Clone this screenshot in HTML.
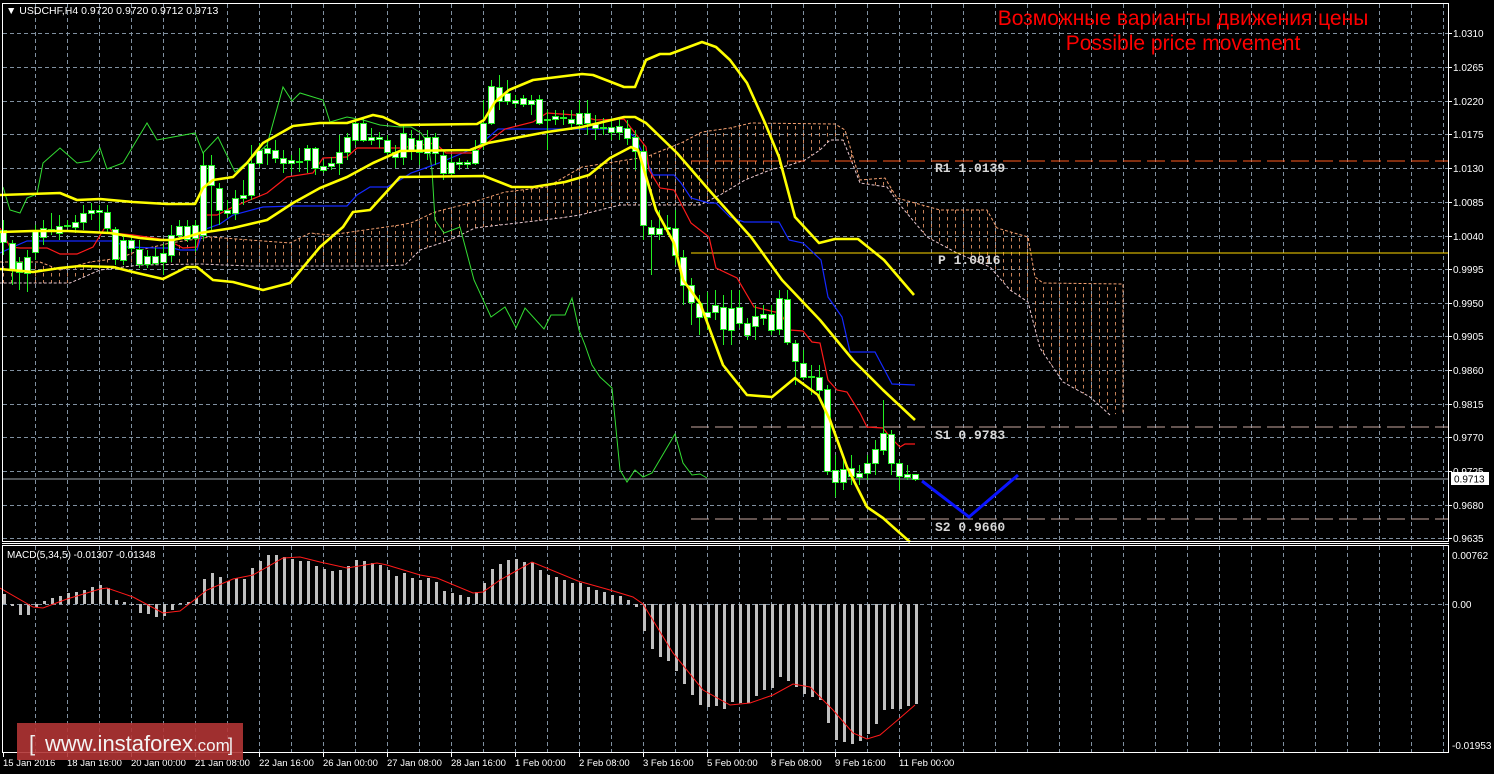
<!DOCTYPE html>
<html><head><meta charset="utf-8"><style>
html,body{margin:0;padding:0;background:#000;width:1494px;height:774px;overflow:hidden}
svg{display:block}
text{font-family:"Liberation Sans","DejaVu Sans",sans-serif}
text.mono{font-family:"Liberation Mono","DejaVu Sans Mono",monospace;font-weight:bold}
</style></head><body>
<svg id="s" width="1494" height="774" xmlns="http://www.w3.org/2000/svg">
<defs>
<pattern id="hatch" width="8" height="7" patternUnits="userSpaceOnUse">
<line x1="3.5" y1="0" x2="3.5" y2="3.5" stroke="#e89868" stroke-width="1"/>
</pattern>
</defs>
<rect width="1494" height="774" fill="#000"/>
<g id="grid" stroke="#8090a0" stroke-width="1" stroke-dasharray="4,3"></g>
<!-- cloud -->
<polygon points="0,262 40,262 60,270 90,262 120,258 140,250 170,243 210,237 250,240 290,243 310,233 330,235 400,225 411,223 435,212 470,203 505,192 547,187 582,167 646,157 681,143 702,132 730,128 751,123 835,124 845,130 860,180 885,178 897,198 940,210 987,210 997,228 1028,237 1035,277 1043,283 1123,284 1123,413 1110,415 1090,397 1063,382 1040,348 1028,302 1010,290 990,267 957,253 927,237 900,205 887,187 860,183 850,157 843,140 830,140 820,150 805,160 790,165 770,170 745,180 720,195 700,205 650,205 620,205 580,215 560,218 500,225 475,228 450,240 420,250 405,265 380,266 300,266 250,266 200,264 140,265 100,270 70,283 40,283 0,283" fill="url(#hatch)" stroke="none" opacity="0.85"/>
<polyline fill="none" stroke="#f4a070" stroke-width="1" stroke-dasharray="3,2" points="0,262 40,262 60,270 90,262 120,258 140,250 170,243 210,237 250,240 290,243 310,233 330,235 400,225 411,223 435,212 470,203 505,192 547,187 582,167 646,157 681,143 702,132 730,128 751,123 835,124 845,130 860,180 885,178 897,198 940,210 987,210 997,228 1028,237 1035,277 1043,283 1123,284 1123,413"/>
<polyline fill="none" stroke="#e8c8d0" stroke-width="1" stroke-dasharray="3,2" points="1110,415 1090,397 1063,382 1040,348 1028,302 1010,290 990,267 957,253 927,237 900,205 887,187 860,183 850,157 843,140 830,140 820,150 805,160 790,165 770,170 745,180 720,195 700,205 650,205 620,205 580,215 560,218 500,225 475,228 450,240 420,250 405,265 380,266 300,266 250,266 200,264 140,265 100,270 70,283 40,283 0,283"/>
<!-- pivot lines -->
<line x1="691" y1="161" x2="1449" y2="161" stroke="#ff5a1e" stroke-width="1" stroke-dasharray="18,6"/>
<line x1="691" y1="253" x2="1449" y2="253" stroke="#ffd700" stroke-width="1"/>
<line x1="691" y1="427" x2="1449" y2="427" stroke="#c8a8a0" stroke-width="1" stroke-dasharray="18,6"/>
<line x1="691" y1="519" x2="1449" y2="519" stroke="#c8a8a0" stroke-width="1" stroke-dasharray="18,6"/>
<line x1="2" y1="479" x2="1449" y2="479" stroke="#a0a8b0" stroke-width="1"/>
<g font-size="13" fill="#d8d8d8">
<text class="mono" x="935" y="172">R1 1.0139</text>
<text class="mono" x="938" y="264">P 1.0016</text>
<text class="mono" x="935" y="439">S1 0.9783</text>
<text class="mono" x="935" y="531">S2 0.9660</text>
</g>
<!-- chikou -->
<polyline fill="none" stroke="#33dd33" stroke-width="1" points="3,187 10,210 20,213 27,198 37,194 43,163 60,148 77,163 90,161 100,148 107,169 123,163 147,123 157,140 173,137 195,133 203,153 218,137 235,172 247,162 267,145 283,87 292,101 300,93 323,100 330,122 347,117 363,120 380,125 400,127 411,127 421,133 428,143 432,170 435,220 444,233 460,227 474,280 491,317 505,307 516,328 525,308 544,329 551,315 565,315 572,298 579,330 585,345 592,365 600,377 612,388 620,470 627,482 635,470 643,477 652,473 675,434 683,463 692,475 700,474 707,478"/>
<!-- kijun blue -->
<polyline fill="none" stroke="#1428ff" stroke-width="1.2" points="0,253 13,247 27,241 113,241 127,247 157,248 173,248 180,250 197,250 203,230 220,224 233,215 263,207 293,206 347,206 357,195 370,187 387,187 400,180 411,173 428,167 439,163 477,147 498,129 624,129 635,137 646,160 653,175 674,175 681,183 691,198 709,203 716,203 730,217 744,222 779,222 789,240 803,243 821,260 828,297 842,317 850,352 875,352 892,384 915,385"/>
<!-- tenkan red -->
<polyline fill="none" stroke="#ff1a1a" stroke-width="1.2" points="0,228 10,247 20,248 47,248 60,254 77,254 93,247 107,224 113,233 133,235 167,240 183,248 197,247 204,215 217,215 233,207 250,200 267,193 287,177 313,173 323,158 347,157 357,148 400,148 435,143 446,153 474,153 505,129 533,122 547,113 575,115 596,120 624,119 646,147 649,170 660,188 674,190 691,223 709,237 716,268 737,278 754,307 775,312 780,312 790,330 803,331 812,342 820,343 828,380 837,390 847,392 860,413 867,427 883,428 890,437 900,447 905,444 915,444"/>
<g id="candles"></g>
<!-- bollinger -->
<g fill="none" stroke="#ffff00" stroke-width="2.6" stroke-linejoin="round">
<polyline points="0,195 60,193 77,200 100,199 133,202 167,204 195,204 203,188 213,180 233,177 247,163 263,143 293,126 320,123 347,123 373,115 383,117 400,125 477,124 484,120 495,102 509,90 533,80 582,74 593,75 624,87 635,87 646,60 660,54 670,54 702,42 716,47 730,60 747,83 765,123 779,157 795,217 819,243 835,239 858,239 884,260 914,295"/>
<polyline points="0,232 33,231 67,231 110,233 140,238 160,240 173,240 187,237 200,233 233,228 267,220 293,203 320,188 347,177 373,163 400,151 470,150 488,143 547,132 582,127 624,117 635,117 646,123 677,153 709,190 751,237 782,280 820,320 853,360 883,390 915,420"/>
<polyline points="0,269 33,272 60,268 80,266 113,267 137,273 163,279 187,267 197,267 213,280 233,282 263,290 290,283 320,247 343,227 353,212 370,210 400,177 484,176 512,187 533,187 565,182 589,175 610,158 631,147 638,150 642,163 656,210 674,243 683,280 700,303 723,365 747,395 772,397 795,378 818,395 830,420 847,467 867,507 883,518 910,542"/>
</g>
<!-- projection -->
<polyline fill="none" stroke="#0a14ff" stroke-width="3" points="922,481 969,517 1018,475"/>
<!-- MACD -->
<path id="macd" fill="none" stroke="#c0c0c0" stroke-width="3" d=""/>
<polyline fill="none" stroke="#ff1a1a" stroke-width="1" points="0,588 33,607 43,608 67,599 100,589 107,588 133,597 163,613 180,611 207,590 233,579 253,575 283,558 300,557 320,562 347,568 377,563 387,565 420,575 437,578 473,593 483,592 500,580 532,562 578,581 610,590 633,597 643,604 673,653 703,690 730,705 750,703 773,695 793,684 810,687 833,710 853,733 867,739 880,735 900,718 915,705"/>
<!-- frames -->
<g stroke="#fff" stroke-width="1" fill="none">
<rect x="2.5" y="3.5" width="1446" height="538"/>
<rect x="2.5" y="545.5" width="1446" height="207"/>
</g>
<line x1="2" y1="543.5" x2="1449" y2="543.5" stroke="#fff" stroke-width="1"/>
<g id="axis" font-size="10" fill="#fff"></g>
<rect x="1451" y="472" width="38" height="13" fill="#fff"/>
<text x="1454" y="482.5" font-size="10" fill="#000">0.9713</text>
<text x="6" y="14" font-size="10.5" fill="#fff">▼ USDCHF,H4  0.9720 0.9720 0.9712 0.9713</text>
<text x="7" y="558" font-size="10" fill="#fff">MACD(5,34,5) -0.01307 -0.01348</text>
<text x="1183" y="25" font-size="21" fill="#ff0000" text-anchor="middle">Возможные варианты движения цены</text>
<text x="1183" y="50" font-size="21" fill="#ff0000" text-anchor="middle">Possible price movement</text>
<!-- logo -->
<rect x="17" y="723" width="226" height="37" fill="#b03434" fill-opacity="0.9"/>
<text x="29" y="751" font-size="22" fill="#eee">[</text>
<text x="45" y="751" font-size="22" fill="#f4f4f4">www.instaforex<tspan font-size="17">.com</tspan></text>
<text x="228" y="751" font-size="18" fill="#eee">]</text>
</svg>
<script>
(function(){
var NS="http://www.w3.org/2000/svg";
function el(t,a,p){var e=document.createElementNS(NS,t);for(var k in a)e.setAttribute(k,a[k]);p.appendChild(e);return e;}
var g=document.getElementById('grid');
var lv=[["1.0310",33],["1.0265",67],["1.0220",101],["1.0175",134],["1.0130",168],["1.0085",202],["1.0040",236],["0.9995",269],["0.9950",303],["0.9905",336],["0.9860",370],["0.9815",404],["0.9770",437],["0.9725",471],["0.9680",505],["0.9635",538]];
lv.forEach(function(l){el('line',{x1:3,y1:l[1]+.5,x2:1449,y2:l[1]+.5},g);});
el('line',{x1:3,y1:604.5,x2:1449,y2:604.5},g);
for(var x=35;x<1449;x+=32){el('line',{x1:x+.5,y1:4,x2:x+.5,y2:541},g);el('line',{x1:x+.5,y1:546,x2:x+.5,y2:752},g);}
var ax=document.getElementById('axis');
lv.forEach(function(l){var t=el('text',{x:1453,y:l[1]+4},ax);t.textContent=l[0];el('line',{x1:1449,y1:l[1]+.5,x2:1452,y2:l[1]+.5,stroke:'#fff'},ax);});
[["0.00762",559],["0.00",608],["-0.01953",749]].forEach(function(l){var t=el('text',{x:1452,y:l[1]},ax);t.textContent=l[0];});
var tl=["15 Jan 2016","18 Jan 16:00","20 Jan 00:00","21 Jan 08:00","22 Jan 16:00","26 Jan 00:00","27 Jan 08:00","28 Jan 16:00","1 Feb 00:00","2 Feb 08:00","3 Feb 16:00","5 Feb 00:00","8 Feb 08:00","9 Feb 16:00","11 Feb 00:00"];
tl.forEach(function(s,i){var x=i==0?3:3+64*i;var t=el('text',{x:x,y:766,'font-size':'9.5'},ax);t.textContent=s;el('line',{x1:x+.5,y1:753,x2:x+.5,y2:757,stroke:'#fff'},ax);});
var C=[[3,230,242,220,255],[12,243,270,240,285],[19,262,272,257,290],[27,257,273,250,292],[35,230,252,225,260],[43,228,237,220,245],[51,229,231,213,235],[59,226,233,215,240],[67,225,226,220,228],[75,222,227,215,233],[83,213,222,205,230],[91,210,213,203,220],[99,210,212,205,230],[107,212,228,205,233],[115,229,259,227,265],[123,240,260,235,265],[131,240,248,235,252],[139,249,264,240,268],[147,256,264,250,268],[155,256,263,248,265],[163,253,262,244,275],[171,235,255,225,262],[179,226,235,220,240],[187,226,239,220,242],[195,225,238,220,252],[203,165,235,153,240],[211,165,185,155,230],[219,188,210,183,225],[227,210,213,200,218],[235,198,213,190,220],[243,195,198,180,205],[251,163,195,145,200],[259,150,163,143,167],[267,148,153,140,165],[275,150,158,140,163],[283,158,163,150,173],[291,160,163,155,172],[299,161,162,148,172],[307,148,160,145,173],[315,148,168,147,175],[323,166,170,160,173],[331,163,166,157,170],[339,152,163,135,175],[347,137,152,133,160],[355,123,140,120,145],[363,123,140,118,142],[371,137,140,128,145],[379,137,139,132,148],[387,140,152,135,155],[395,152,157,145,168],[403,133,157,125,165],[411,138,150,130,160],[419,140,152,135,165],[427,137,153,130,160],[435,137,153,133,165],[443,155,173,150,180],[451,162,173,155,177],[459,162,164,158,170],[467,162,164,160,168],[475,150,163,140,165],[483,123,143,100,150],[491,86,123,80,125],[499,87,101,75,110],[507,93,101,80,105],[515,100,103,95,108],[523,98,104,95,107],[531,100,104,95,115],[539,99,123,95,125],[547,119,120,110,150],[555,116,119,110,125],[563,117,118,110,125],[571,119,123,110,130],[579,113,124,100,130],[587,113,123,100,135],[595,124,128,115,140],[603,127,128,118,135],[611,127,132,118,140],[619,126,132,118,140],[627,128,138,120,145],[635,137,151,130,170],[643,151,225,145,240],[651,227,234,220,275],[659,228,234,210,240],[667,227,229,215,235],[675,228,255,210,265],[683,257,285,250,305],[691,285,302,278,325],[699,303,317,295,335],[707,312,317,292,330],[715,305,312,290,320],[723,307,329,295,345],[731,308,330,290,345],[739,307,323,290,328],[747,323,335,318,340],[755,316,326,305,340],[763,314,318,305,325],[771,314,330,305,335],[779,298,329,290,335],[787,299,342,290,345],[795,343,361,340,385],[803,363,377,350,380],[811,376,377,365,395],[819,377,390,365,400],[827,389,471,385,475],[835,470,482,455,497],[843,469,482,460,490],[851,468,476,455,485],[859,473,477,465,485],[867,463,473,455,480],[875,449,463,440,475],[883,433,450,400,455],[891,434,463,430,475],[899,463,476,460,490],[907,474,477,465,480],[915,474,479,474,481]];
var cg=document.getElementById('candles');
C.forEach(function(c){var x=c[0];
el('line',{x1:x+.5,y1:c[3],x2:x+.5,y2:c[4],stroke:'#22ee22','stroke-width':1},cg);
var h=Math.max(1,c[2]-c[1]);
el('rect',{x:x-2.5,y:c[1]+.5,width:6,height:h,fill:'#fff',stroke:'#22ee22','stroke-width':1},cg);
});
var H=[10,-2,-11,-11,-3,3,6,8,11,12,14,17,19,16,4,2,-1,-9,-10,-13,-12,-6,1,2,6,25,31,27,23,26,25,36,43,49,49,47,45,43,43,38,35,33,34,38,44,43,41,39,34,28,31,26,24,26,22,13,11,9,7,12,21,35,40,44,45,42,42,34,29,27,24,21,21,17,14,12,9,8,4,-3,-27,-45,-53,-57,-67,-80,-91,-101,-103,-102,-105,-98,-99,-99,-92,-86,-84,-73,-77,-83,-90,-93,-96,-119,-136,-138,-140,-137,-130,-120,-106,-105,-105,-102,-100];
var d="";H.forEach(function(h,i){var x=4+8*i;d+="M"+(x+.5)+" 604V"+(604-h);});
document.getElementById('macd').setAttribute('d',d);
})();
</script>
</body></html>
